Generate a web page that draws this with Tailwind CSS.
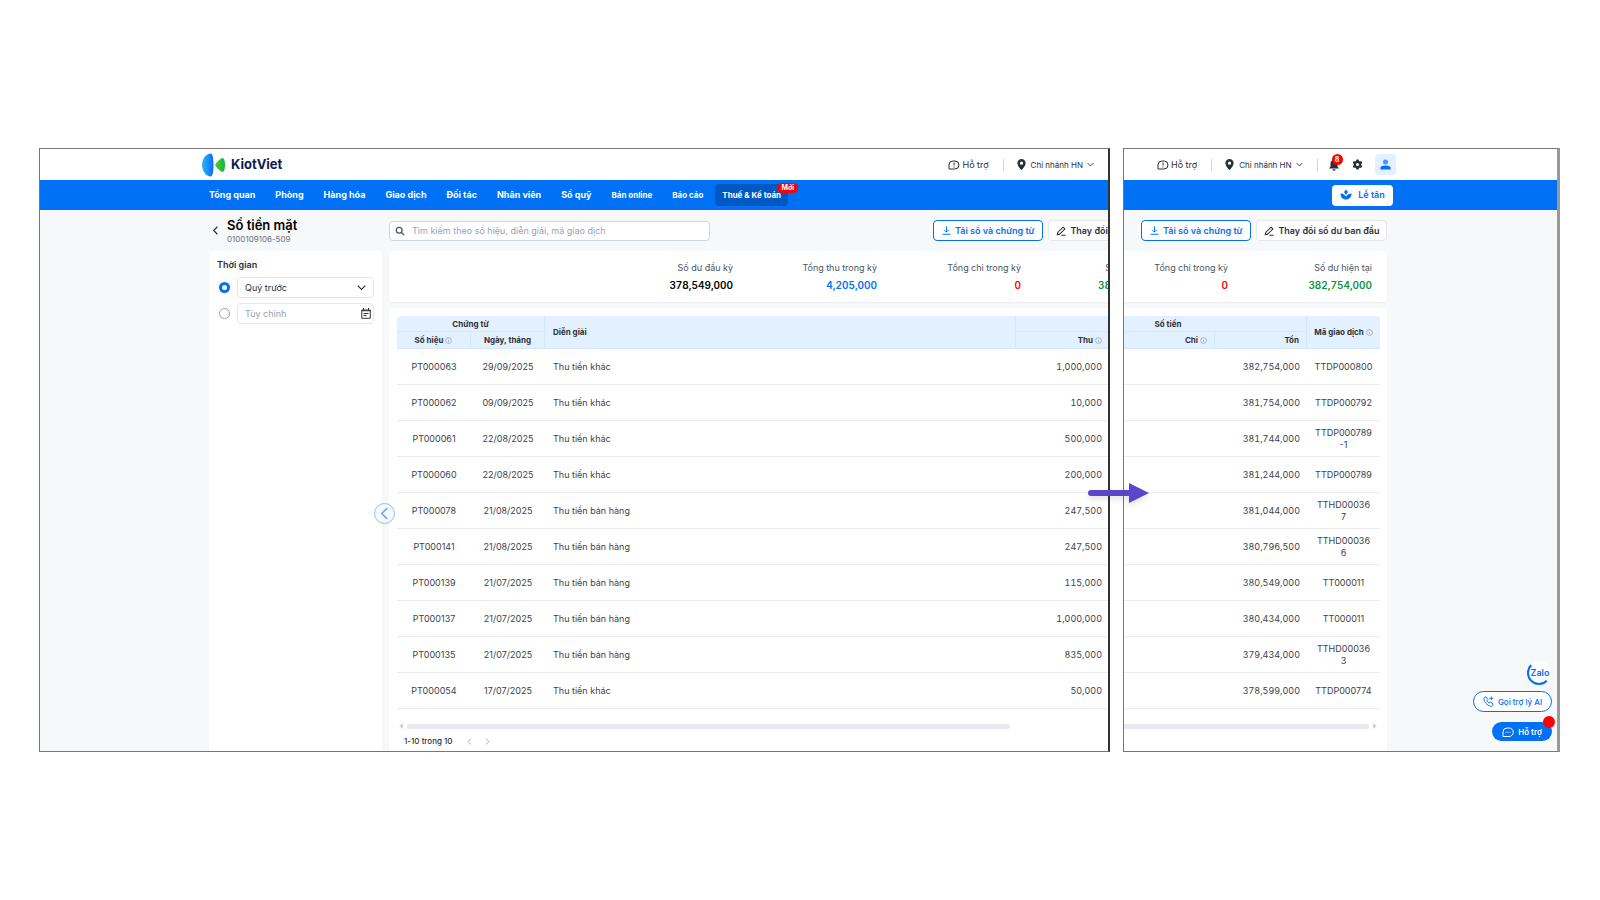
<!DOCTYPE html>
<html lang="vi">
<head>
    <meta charset="UTF-8">
    <meta name="viewport" content="width=device-width, initial-scale=1.0">
    <title>KiotViet - Sổ tiền mặt</title>
    <script src="https://cdn.jsdelivr.net/npm/@tailwindcss/browser@4"></script>
    <style>
        body { font-family: Inter, 'Noto Sans', sans-serif; }
    </style>
</head>
<body class="bg-white text-[#2b3038]">
    <!-- Shared icons -->
    <svg class="hidden">
        <symbol id="chat" viewBox="0 0 24 24" fill="none" stroke="currentColor" stroke-width="2"><path d="M2 20v-8a8 8 0 0 1 8-8h4a8 8 0 0 1 0 16z"/><path d="M12 7v6M12 15v2"/></symbol>
        <symbol id="pin" viewBox="0 0 24 24"><path fill="currentColor" fill-rule="evenodd" d="M12 0a9 9 0 0 0-9 9c0 6 9 15 9 15s9-9 9-15a9 9 0 0 0-9-9zm0 5.500a3.500 3.500 0 1 1 0 7 3.500 3.500 0 0 1 0-7z"/></symbol>
        <symbol id="down" viewBox="0 0 24 24" fill="none" stroke="currentColor" stroke-width="3"><path d="M2 7l10 10L22 7"/></symbol>
        <symbol id="left" viewBox="0 0 24 24" fill="none" stroke="currentColor" stroke-width="3"><path d="M17 2L7 12l10 10"/></symbol>
        <symbol id="download" viewBox="0 0 24 24" fill="none" stroke="currentColor" stroke-width="2.500"><path d="M12 1v15M5.500 10L12 16.500 18.500 10M1 22h22"/></symbol>
        <symbol id="pencil" viewBox="0 0 24 24" fill="none" stroke="currentColor" stroke-width="2.500" stroke-linejoin="round"><path d="M3 21l1.500-6L17 2.500l4.500 4.500L9 19.500zM13 22h10"/></symbol>
        <symbol id="info" viewBox="0 0 24 24" fill="none" stroke="currentColor" stroke-width="2.500"><circle cx="12" cy="12" r="10"/><path d="M12 6v2M12 11v7"/></symbol>
    </svg>

    <div class="min-h-screen pl-[39px] pr-10 flex items-center">
        <div class="relative w-full flex gap-[13px]">

            <!-- Left part of the page -->
            <div class="flex-1 min-w-0 overflow-hidden bg-[#f6f8fa] border border-[#777] border-r-2 border-r-[#333] flex flex-col">
                <header class="h-[31px] bg-white pl-[161px] pr-[14px] flex items-center">
                    <svg class="w-6 h-6" viewBox="0 0 24 24">
                        <defs>
                            <linearGradient id="blue"><stop offset="0" stop-color="#2db4f8"/><stop offset="1" stop-color="#0a6cf5"/></linearGradient>
                            <linearGradient id="green"><stop offset="0" stop-color="#4cd137"/><stop offset="1" stop-color="#12b53a"/></linearGradient>
                        </defs>
                        <path fill="url(#blue)" d="M10 .5c1.500 0 2.500 5 2.500 11.500S11.500 23.500 10 23.500C5 23.500 1 18 1 12S5 .5 10 .5z"/>
                        <path fill="url(#green)" d="M14 12c0-1 5.500-7 7.500-7 1.500 0 2.500 3 2.500 7s-1 7-2.500 7c-2 0-7.500-6-7.500-7z"/>
                    </svg>
                    <span class="ml-[6px] text-[13px] font-bold text-[#0c1d4f]">KiotViet</span>
                    <a href="#" class="ml-auto flex items-center gap-[2px] text-[9px]"><svg class="w-3 h-3"><use href="#chat"/></svg>Hỗ trợ</a>
                    <span class="ml-[14px] mr-3 w-px h-3 bg-gray-300"></span>
                    <button class="flex items-center gap-1 text-[8px]"><svg class="w-[11px] h-[11px]"><use href="#pin"/></svg>Chi nhánh HN<svg class="w-[7px] h-[7px]"><use href="#down"/></svg></button>
                </header>
                <nav class="h-[30px] bg-[#0070f4] pl-[169px] flex items-center gap-5 text-[9px] font-bold text-white whitespace-nowrap">
                    <a href="#">Tổng quan</a>
                    <a href="#">Phòng</a>
                    <a href="#">Hàng hóa</a>
                    <a href="#">Giao dịch</a>
                    <a href="#">Đối tác</a>
                    <a href="#">Nhân viên</a>
                    <a href="#">Sổ quỹ</a>
                    <a href="#" class="text-[8px]">Bán online</a>
                    <a href="#" class="text-[8px]">Báo cáo</a>
                    <a href="#" class="relative -ml-2 h-[22px] px-[7px] flex items-center rounded bg-[#0059c2] text-[8px]">Thuế &amp; Kế toán
                        <span class="absolute -top-px -right-[10px] h-[10px] px-1 rounded-full bg-[#f00] text-[7px] leading-[10px]">Mới</span>
                    </a>
                </nav>
                <div class="h-[41px] pl-[169px] flex items-center">
                    <div class="w-[180px] pl-[2px] flex items-center gap-[7px]">
                        <a href="#" aria-label="Quay lại"><svg class="w-[9px] h-[11px]"><use href="#left"/></svg></a>
                        <div>
                            <h1 class="text-[13px] leading-4 font-semibold text-black">Sổ tiền mặt</h1>
                            <p class="text-[8px] leading-3 text-gray-500">0100109106-509</p>
                        </div>
                    </div>
                    <label class="w-[321px] h-5 px-[5px] flex items-center gap-[7px] rounded border border-gray-300 bg-white text-gray-600">
                        <svg class="w-[10px] h-[10px]" viewBox="0 0 24 24" fill="none" stroke="currentColor" stroke-width="3"><circle cx="10" cy="10" r="7"/><path d="M15 15l7 7"/></svg>
                        <input type="text" aria-label="Tìm kiếm" placeholder="Tìm kiếm theo số hiệu, diễn giải, mã giao dịch" class="flex-1 text-[9px] outline-none placeholder:text-gray-400">
                    </label>
                    <div class="ml-auto w-[175px] flex gap-[5px] text-[9px] font-semibold whitespace-nowrap">
                        <button class="shrink-0 h-[21px] px-2 flex items-center gap-1 rounded border border-[#0070f4] bg-white text-[#0070f4]"><svg class="w-[9px] h-[9px]"><use href="#download"/></svg>Tải sổ và chứng từ</button>
                        <button class="shrink-0 h-[21px] w-[131px] px-[7px] flex items-center gap-1 rounded border border-gray-200 bg-white"><svg class="w-[10px] h-[10px]"><use href="#pencil"/></svg>Thay đổi</button>
                    </div>
                </div>

                <div class="relative flex-1 pl-[169px] flex gap-[7px]">
                    <!-- Filter -->
                    <aside class="w-[173px] shrink-0 px-2 pt-2 rounded-t bg-white">
                        <fieldset>
                            <legend class="text-[9px] leading-3 font-semibold">Thời gian</legend>
                            <div class="mt-[6px] flex items-center gap-[7px]">
                                <input type="radio" name="period" id="preset" aria-label="Theo quý" checked class="ml-[2px] w-[11px] h-[11px] appearance-none rounded-full border border-gray-400 checked:border-3 checked:border-[#0070f4]">
                                <div class="relative flex-1 flex items-center">
                                    <select aria-label="Kỳ" class="w-full h-[21px] px-[7px] appearance-none rounded border border-gray-200 bg-white text-[9px]"><option>Quý trước</option></select>
                                    <svg class="absolute right-2 w-[9px] h-[9px] pointer-events-none"><use href="#down"/></svg>
                                </div>
                            </div>
                            <div class="mt-[5px] flex items-center gap-[7px]">
                                <input type="radio" name="period" id="custom" aria-label="Tùy chỉnh" class="ml-[2px] w-[11px] h-[11px] appearance-none rounded-full border border-gray-400 checked:border-3 checked:border-[#0070f4]">
                                <div class="relative flex-1 flex items-center">
                                    <input type="text" aria-label="Khoảng ngày" placeholder="Tùy chỉnh" class="w-full h-[21px] px-[7px] rounded border border-gray-200 bg-white text-[9px] placeholder:text-gray-400">
                                    <svg class="absolute right-[3px] w-[10px] h-[11px]" viewBox="0 0 20 22" fill="none" stroke="currentColor" stroke-width="2"><path d="M1.500 4h17v16.500h-17zM1.500 5.500h17M5 0v4M15 0v4M5 11h10M5 15h6"/></svg>
                                </div>
                            </div>
                        </fieldset>
                    </aside>
                    <button aria-label="Thu gọn" class="absolute left-[334px] top-[252px] w-[21px] h-[21px] flex items-center justify-center rounded-full border border-[#8fc0fa] bg-[#f6f8fa] text-[#6aabf8]"><svg class="w-[13px] h-[13px]"><use href="#left"/></svg></button>

                    <main class="flex-1 min-w-0 flex flex-col gap-[6px]">
                        <section class="h-[51px] rounded-l bg-white shadow-xs flex items-center justify-end">
                            <dl class="-mr-[3px] flex text-right text-[9px] text-gray-600 tabular-nums whitespace-nowrap">
                                <div class="w-[144px]"><dt class="leading-3">Số dư đầu kỳ</dt><dd class="mt-1 text-[10px] leading-[14px] font-semibold text-black">378,549,000</dd></div>
                                <div class="w-[144px]"><dt class="leading-3">Tổng thu trong kỳ</dt><dd class="mt-1 text-[10px] leading-[14px] font-semibold text-[#0070f4]">4,205,000</dd></div>
                                <div class="w-[144px]"><dt class="leading-3">Tổng chi trong kỳ</dt><dd class="mt-1 text-[10px] leading-[14px] font-semibold text-[#f00]">0</dd></div>
                                <div class="w-[90px]"><dt class="leading-3">S</dt><dd class="mt-1 text-[10px] leading-[14px] font-semibold text-[#0a9440]">38</dd></div>
                            </dl>
                        </section>
                        <section class="flex-1 pl-2 pt-2 rounded-tl bg-white">
                            <table class="w-full table-fixed border-separate border-spacing-0 text-[9px] text-[#3d424a]">
                                <colgroup><col class="w-[74px]"><col class="w-[74px]"><col><col class="w-[92px]"></colgroup>
                                <thead class="bg-[#e3f0ff] text-[8px] font-semibold text-[#2b3038]">
                                    <tr class="h-4">
                                        <th colspan="2" class="rounded-tl border-r border-b border-[#d3e7fd]">Chứng từ</th>
                                        <th rowspan="2" class="pl-2 text-left border-r border-b border-[#d3e7fd]">Diễn giải</th>
                                        <th class="border-b border-[#d3e7fd]"></th>
                                    </tr>
                                    <tr class="h-[17px]">
                                        <th class="border-r border-b border-[#d3e7fd]"><span class="flex items-center justify-center gap-[2px]">Số hiệu<svg class="w-[7px] h-[7px] text-gray-400"><use href="#info"/></svg></span></th>
                                        <th class="border-r border-b border-[#d3e7fd]">Ngày, tháng</th>
                                        <th class="pr-[6px] border-b border-[#d3e7fd]"><span class="flex items-center justify-end gap-[2px]">Thu<svg class="w-[7px] h-[7px] text-gray-400"><use href="#info"/></svg></span></th>
                                    </tr>
                                </thead>
                                <tbody id="leftRows"></tbody>
                            </table>
                            <div class="mt-[14px] flex items-center gap-1">
                                <span class="ml-[2px] border-y-3 border-y-transparent border-r-4 border-r-gray-300"></span>
                                <span class="w-[603px] h-[5px] rounded-full bg-[#e8e8ee]"></span>
                            </div>
                            <div class="mt-[6px] pl-[7px] pb-1 flex items-center text-[8px] leading-3 font-medium">
                                <span>1-10 trong 10</span>
                                <button aria-label="Trang trước" class="ml-[13px] text-gray-400"><svg class="w-[7px] h-[7px]"><use href="#left"/></svg></button>
                                <button aria-label="Trang sau" class="ml-[11px] text-gray-400"><svg class="w-[7px] h-[7px] rotate-180"><use href="#left"/></svg></button>
                            </div>
                        </section>
                    </main>
                </div>
            </div>

            <!-- Right part of the page -->
            <div class="relative w-[437px] shrink-0 overflow-hidden bg-[#f6f8fa] border border-[#777] border-r-3 border-r-[#999] flex flex-col">
                <header class="h-[31px] bg-white pl-[33px] flex items-center">
                    <a href="#" class="flex items-center gap-[2px] text-[9px]"><svg class="w-3 h-3"><use href="#chat"/></svg>Hỗ trợ</a>
                    <span class="ml-[14px] mr-3 w-px h-3 bg-gray-300"></span>
                    <button class="flex items-center gap-1 text-[8px]"><svg class="w-[11px] h-[11px]"><use href="#pin"/></svg>Chi nhánh HN<svg class="w-[7px] h-[7px]"><use href="#down"/></svg></button>
                    <span class="mx-[14px] w-px h-3 bg-gray-300"></span>
                    <button aria-label="Thông báo" class="relative -ml-1 mr-3">
                        <svg class="w-3 h-3" viewBox="0 0 24 24" fill="currentColor"><path d="M12 2a7 7 0 0 0-7 7v6l-3 4h20l-3-4V9a7 7 0 0 0-7-7zM9 20.500h6a3 3 0 0 1-6 0z"/></svg>
                        <span class="absolute -top-[5px] left-1 w-[11px] h-[11px] rounded-full bg-[#f00] text-white text-[7px] leading-[11px] font-bold">8</span>
                    </button>
                    <button aria-label="Cài đặt" class="mr-3"><svg class="w-[11px] h-[11px]" viewBox="0 0 24 24"><path fill="currentColor" fill-rule="evenodd" d="M9.500 1h5l.6 3 2 1.200L20 4.200l2.500 4.300-2.300 2v3l2.300 2L20 19.800l-2.900-1-2 1.200-.6 3h-5l-.6-3-2-1.200-2.900 1L1.500 15.500l2.300-2v-3l-2.300-2L4 4.200l2.900 1 2-1.200zM12 8.500a3.500 3.500 0 1 0 0 7 3.500 3.500 0 0 0 0-7z"/></svg></button>
                    <button aria-label="Tài khoản" class="w-[21px] h-[21px] flex items-center justify-center rounded bg-[#e3f0ff] text-[#0070f4]"><svg class="w-[11px] h-[11px]" viewBox="0 0 24 24" fill="currentColor"><circle cx="12" cy="6.500" r="5.500" opacity=".7"/><path d="M1 23v-4c0-3 4-5 11-5s11 2 11 5v4z"/></svg></button>
                </header>
                <div class="h-[30px] bg-[#0070f4] pl-[208px] flex items-center">
                    <button class="h-[21px] w-[61px] flex items-center justify-center gap-[6px] rounded bg-white text-[9px] font-semibold text-[#0070f4]">
                        <svg class="w-3 h-3" viewBox="0 0 24 24" fill="currentColor"><path d="M12 1l4 5-4 6-4-6zM1 9c6 0 9 3 11 6 2-3 5-6 11-6 0 7-4 12-11 12S1 16 1 9z"/></svg>Lễ tân
                    </button>
                </div>
                <div class="h-[41px] pl-[17px] flex items-center gap-[5px] text-[9px] font-semibold whitespace-nowrap">
                    <button class="shrink-0 h-[21px] px-2 flex items-center gap-1 rounded border border-[#0070f4] bg-white text-[#0070f4]"><svg class="w-[9px] h-[9px]"><use href="#download"/></svg>Tải sổ và chứng từ</button>
                    <button class="shrink-0 h-[21px] px-[7px] flex items-center gap-1 rounded border border-gray-200 bg-white"><svg class="w-[10px] h-[10px]"><use href="#pencil"/></svg>Thay đổi số dư ban đầu</button>
                </div>
                <div class="flex-1 pr-[170px] flex flex-col gap-[6px]">
                    <section class="h-[51px] pr-[15px] rounded-r bg-white shadow-xs flex items-center justify-end">
                        <dl class="flex text-right text-[9px] text-gray-600 tabular-nums whitespace-nowrap">
                            <div class="w-[144px]"><dt class="leading-3">Tổng chi trong kỳ</dt><dd class="mt-1 text-[10px] leading-[14px] font-semibold text-[#f00]">0</dd></div>
                            <div class="w-[144px]"><dt class="leading-3">Số dư hiện tại</dt><dd class="mt-1 text-[10px] leading-[14px] font-semibold text-[#0a9440]">382,754,000</dd></div>
                        </dl>
                    </section>
                    <section class="flex-1 pr-[7px] pt-2 rounded-tr bg-white">
                        <table class="w-full table-fixed border-separate border-spacing-0 text-[9px] text-[#3d424a]">
                            <colgroup><col><col class="w-[92px]"><col class="w-[73px]"></colgroup>
                            <thead class="bg-[#e3f0ff] text-[8px] font-semibold text-[#2b3038]">
                                <tr class="h-4">
                                    <th colspan="2" class="pr-[94px] border-r border-b border-[#d3e7fd]">Số tiền</th>
                                    <th rowspan="2" class="rounded-tr border-b border-[#d3e7fd]"><span class="flex items-center justify-center gap-[2px]">Mã giao dịch<svg class="w-[7px] h-[7px] text-gray-400"><use href="#info"/></svg></span></th>
                                </tr>
                                <tr class="h-[17px]">
                                    <th class="pr-[7px] border-r border-b border-[#d3e7fd]"><span class="flex items-center justify-end gap-[2px]">Chi<svg class="w-[7px] h-[7px] text-gray-400"><use href="#info"/></svg></span></th>
                                    <th class="pr-[7px] text-right border-r border-b border-[#d3e7fd]">Tồn</th>
                                </tr>
                            </thead>
                            <tbody id="rightRows"></tbody>
                        </table>
                        <div class="mt-[14px] flex items-center gap-1">
                            <span class="w-[245px] h-[5px] rounded-r-full bg-[#e8e8ee]"></span>
                            <span class="border-y-3 border-y-transparent border-l-4 border-l-gray-300"></span>
                        </div>
                    </section>
                </div>

                <!-- Floating help buttons -->
                <div class="absolute right-[5px] bottom-[10px] flex flex-col items-end">
                    <button class="mr-px w-6 h-6 pl-[2px] rounded-full bg-white border-2 border-transparent border-l-[#0070f4] border-b-[#0070f4] text-[9px] font-semibold text-[#0070f4] flex items-center justify-center">Zalo</button>
                    <button class="mt-[6px] h-[21px] w-[79px] flex items-center justify-center gap-1 rounded-full border border-[#0070f4] bg-white text-[8px] font-medium text-[#0070f4] whitespace-nowrap">
                        <svg class="w-[11px] h-[11px]" viewBox="0 0 24 24" fill="none" stroke="currentColor" stroke-width="2"><path d="M3 3l4-1 4 6-2.500 2.500c1 2.500 2.500 4 5 5L16 13l6 4-1 4c-1 2-4 2-8 0C7 18 4 14 2.500 9 2 6 2 4 3 3zM18 1v8M14 5h8"/></svg>Gọi trợ lý AI
                    </button>
                    <button class="relative mt-[10px] h-[19px] w-[60px] flex items-center justify-center gap-1 rounded-full bg-[#0070f4] text-[8px] font-semibold text-white">
                        <svg class="w-3 h-3" viewBox="0 0 24 24" fill="none" stroke="currentColor" stroke-width="2"><path d="M2 21v-9a8 8 0 0 1 8-8h4a8 8 0 0 1 0 17z"/><path d="M7 12.500h2M11 12.500h2M15 12.500h2"/></svg>Hỗ trợ
                        <span class="absolute -top-[6px] -right-[3px] w-3 h-3 rounded-full bg-[#f00]"></span>
                    </button>
                </div>
            </div>

            <!-- Arrow between the two parts -->
            <svg class="absolute right-[408px] top-[332px] w-[66px] h-[30px] drop-shadow-md" viewBox="0 0 66 30"><path fill="#5b45c9" d="M5 10h38V3l20 10-20 10v-7H5a3 3 0 0 1 0-6z"/></svg>
        </div>
    </div>

    <script>
        const rows = [
            ['PT000063', '29/09/2025', 'Thu tiền khác', '1,000,000', '382,754,000', 'TTDP000800'],
            ['PT000062', '09/09/2025', 'Thu tiền khác', '10,000', '381,754,000', 'TTDP000792'],
            ['PT000061', '22/08/2025', 'Thu tiền khác', '500,000', '381,744,000', 'TTDP000789<br>-1'],
            ['PT000060', '22/08/2025', 'Thu tiền khác', '200,000', '381,244,000', 'TTDP000789'],
            ['PT000078', '21/08/2025', 'Thu tiền bán hàng', '247,500', '381,044,000', 'TTHD00036<br>7'],
            ['PT000141', '21/08/2025', 'Thu tiền bán hàng', '247,500', '380,796,500', 'TTHD00036<br>6'],
            ['PT000139', '21/07/2025', 'Thu tiền bán hàng', '115,000', '380,549,000', 'TT000011'],
            ['PT000137', '21/07/2025', 'Thu tiền bán hàng', '1,000,000', '380,434,000', 'TT000011'],
            ['PT000135', '21/07/2025', 'Thu tiền bán hàng', '835,000', '379,434,000', 'TTHD00036<br>3'],
            ['PT000054', '17/07/2025', 'Thu tiền khác', '50,000', '378,599,000', 'TTDP000774']
        ];

        document.getElementById('leftRows').innerHTML = rows.map(r => `
            <tr class="h-9">
                <td class="text-center border-b border-[#e9eaee]">${r[0]}</td>
                <td class="text-center border-b border-[#e9eaee]">${r[1]}</td>
                <td class="pl-2 border-b border-[#e9eaee]">${r[2]}</td>
                <td class="pr-[6px] text-right tabular-nums border-b border-[#e9eaee]">${r[3]}</td>
            </tr>
        `).join('');

        document.getElementById('rightRows').innerHTML = rows.map(r => `
            <tr class="h-9">
                <td class="border-b border-[#e9eaee]"></td>
                <td class="pr-[7px] text-right tabular-nums border-b border-[#e9eaee]">${r[4]}</td>
                <td class="text-center leading-3 border-b border-[#e9eaee]">${r[5]}</td>
            </tr>
        `).join('');
    </script>
</body>
</html>
